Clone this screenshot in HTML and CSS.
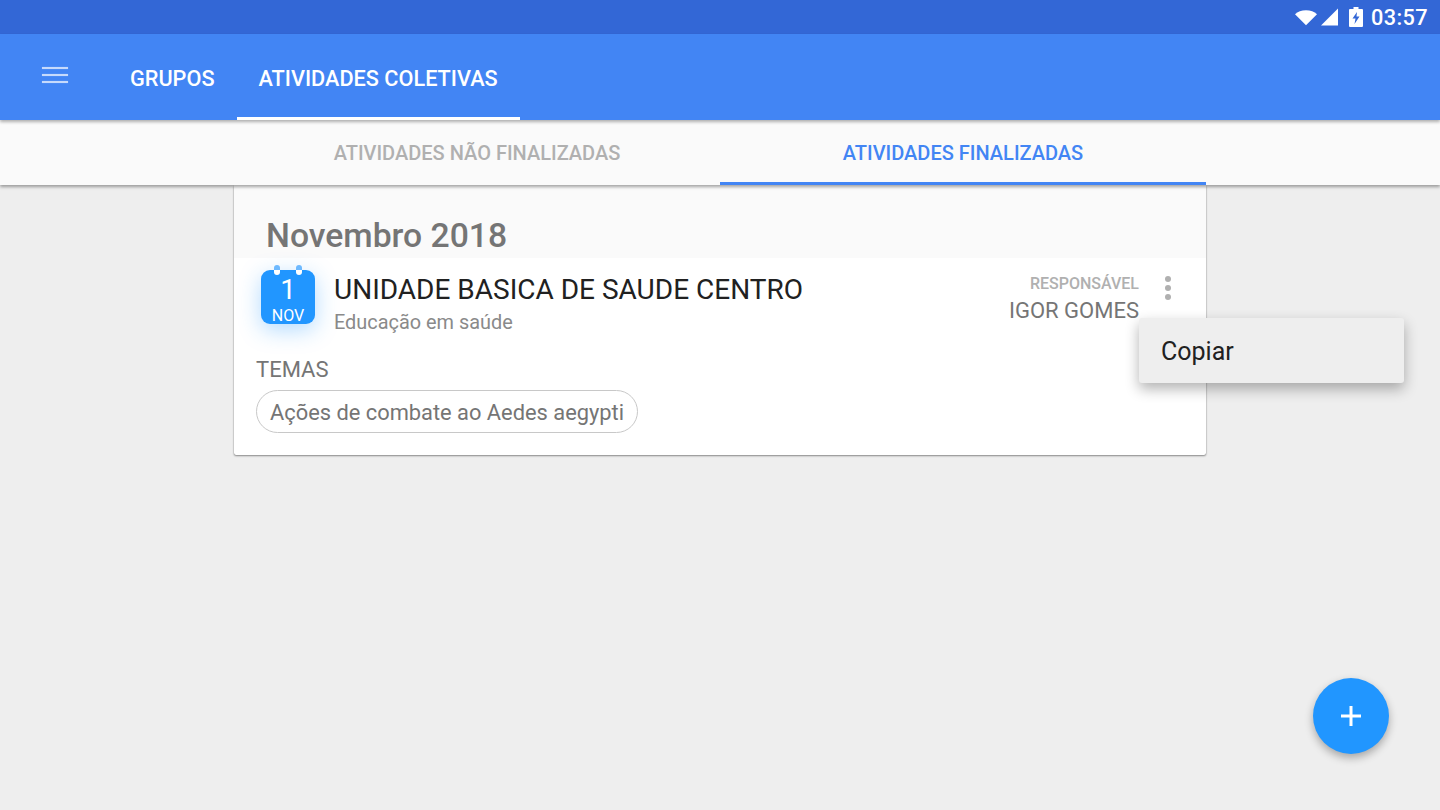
FILE: index.html
```html
<!DOCTYPE html>
<html lang="pt">
<head>
<meta charset="utf-8">
<title>Atividades coletivas</title>
<link rel="stylesheet" href="styles.css">
</head>
<body>
<div class="status">
  <svg class="st-wifi" width="22" height="17" viewBox="0 0 24 18"><path fill="#fff" d="M0 5.500C3 2.600 7 1 12 1s9 1.600 12 4.500L12 17.500z"/></svg>
  <svg class="st-signal" width="18" height="18" viewBox="0 0 18 18"><path fill="#fff" d="M18 0.500V17.500H1z"/></svg>
  <svg class="st-batt" width="14" height="20" viewBox="0 0 14 20"><path fill="#fff" fill-rule="evenodd" d="M4.500 0h5v2H13a1 1 0 0 1 1 1v16a1 1 0 0 1-1 1H1a1 1 0 0 1-1-1V3a1 1 0 0 1 1-1h3.500zM8 5 3.500 11.500H6.500L5.500 17 10.500 9.500H7.500z"/></svg>
  <span class="clock">03:57</span>
</div>
<header class="appbar">
  <button class="menu" aria-label="Menu"><span></span><span></span><span></span></button>
  <nav class="maintabs">
    <a class="maintab">GRUPOS</a>
    <a class="maintab active">ATIVIDADES COLETIVAS</a>
  </nav>
</header>
<nav class="subtabs">
  <a class="subtab">ATIVIDADES NÃO FINALIZADAS</a>
  <a class="subtab active">ATIVIDADES FINALIZADAS</a>
</nav>
<main class="content">
  <section class="card">
    <h2 class="month">Novembro 2018</h2>
    <div class="item">
      <div class="row">
        <div class="cal">
          <i class="ring r1"></i><i class="ring r2"></i>
          <span class="cal-day">1</span>
          <span class="cal-mon">NOV</span>
        </div>
        <div class="title">
          <div class="name">UNIDADE BASICA DE SAUDE CENTRO</div>
          <div class="kind">Educação em saúde</div>
        </div>
        <div class="resp">
          <div class="resp-label">RESPONSÁVEL</div>
          <div class="resp-name">IGOR GOMES</div>
        </div>
        <div class="dots"><i></i><i></i><i></i></div>
      </div>
      <div class="temas">TEMAS</div>
      <span class="chip">Ações de combate ao Aedes aegypti</span>
    </div>
  </section>
</main>
<div class="popup">Copiar</div>
<button class="fab" aria-label="Adicionar">
  <svg width="20" height="20" viewBox="0 0 20 20"><path fill="#fff" d="M8.500 0h3v8.500H20v3H11.500V20h-3V11.500H0v-3H8.500z"/></svg>
</button>
</body>
</html>
```

FILE: styles.css
```css
* { box-sizing: border-box; }
html, body { margin: 0; height: 810px; overflow: hidden; }
body { background: #eeeeee; font-family: Roboto, "Liberation Sans", sans-serif; display: flex; flex-direction: column; position: relative; }

.status { height: 34px; background: #3367d6; display: flex; align-items: center; justify-content: flex-end; padding-right: 12px; flex: none; }
.st-wifi { margin-right: 3px; }
.st-signal { margin-right: 11px; }
.st-batt { margin-right: 8px; }
.clock { color: #fff; font-size: 21.7px; font-weight: 500; letter-spacing: 0.4px; }

.appbar { height: 86px; background: #4285f4; display: flex; flex: none; position: relative; z-index: 3; box-shadow: 0 2px 3px rgba(0,0,0,.3); }
.menu { width: 26px; height: 16px; margin: 33px 0 0 42px; padding: 0; border: 0; background: none; display: flex; flex-direction: column; justify-content: space-between; }
.menu span { display: block; height: 2px; background: #c6dafc; box-shadow: 0 0 1px rgba(255,255,255,.5); }
.maintabs { display: flex; margin-left: 40px; }
.maintab { color: #fff; font-size: 21.7px; font-weight: 500; height: 86px; padding: 0 22px; line-height: 90px; }
.maintab.active { border-bottom: 3px solid #fff; }

.subtabs { height: 65px; background: #fafafa; display: flex; padding: 0 234px; flex: none; position: relative; z-index: 2; box-shadow: 0 2px 3px rgba(0,0,0,.35); }
.subtab { flex: 1; text-align: center; color: #b0b0b0; font-size: 20px; font-weight: 500; line-height: 66px; }
.subtab.active { color: #4285f4; border-bottom: 3px solid #4285f4; }

.content { flex: 1; padding: 0 234px; }
.card { background: #fff; box-shadow: 0 1px 2px rgba(0,0,0,.4), 0 0 1px rgba(0,0,0,.45); border-radius: 2px; height: 270px; }
.month { margin: 0; height: 73px; background: #fafafa; padding: 30px 0 0 32px; font-size: 33.7px; line-height: 42px; font-weight: 500; color: #757575; }
.item { padding: 0 0 0 22px; }
.row { display: flex; height: 92px; }
.cal { width: 54px; height: 54px; margin: 12px 0 0 5px; background: #2196ff; border-radius: 9px; position: relative; box-shadow: 0 6px 22px rgba(33,150,255,.34); color: #fff; display: flex; flex-direction: column; align-items: center; flex: none; }
.ring { position: absolute; top: -5px; width: 6px; height: 10px; border-radius: 3px; background: linear-gradient(#6db9ff 55%, #fff 55%); }
.r1 { left: 13px; }
.r2 { left: 35px; }
.cal-day { font-size: 28px; line-height: 30px; margin-top: 5px; }
.cal-mon { font-size: 16px; line-height: 18px; margin-top: 2px; }
.title { margin-left: 19px; flex: 1; }
.name { font-size: 28px; line-height: 32px; margin-top: 16px; color: #212121; }
.kind { font-size: 19.9px; line-height: 24px; margin-top: 5px; color: #8a8a8a; }
.resp { text-align: right; }
.resp-label { font-size: 16px; font-weight: 500; color: #b0b0b0; line-height: 18px; margin-top: 17px; }
.resp-name { font-size: 22px; line-height: 28px; color: #757575; margin-top: 4px; }
.dots { width: 67px; padding: 18px 0 0 26px; display: flex; flex-direction: column; gap: 3px; flex: none; }
.dots i { width: 6px; height: 6px; border-radius: 50%; background: #b0b0b0; }
.temas { font-size: 22px; line-height: 26px; color: #757575; margin-top: 7px; }
.chip { display: inline-block; margin-top: 7px; height: 43px; border: 1px solid #c8c8c8; border-radius: 22px; padding: 0 13px; font-size: 21.85px; color: #757575; line-height: 43px; }

.popup { position: absolute; left: 1139px; top: 318px; width: 265px; height: 65px; background: #eeeeee; border-radius: 3px; box-shadow: 0 6px 14px rgba(0,0,0,.3); font-size: 25px; line-height: 67px; padding-left: 22px; color: #212121; z-index: 5; }
.fab { position: absolute; left: 1312.500px; top: 677.500px; width: 76px; height: 76px; border-radius: 50%; border: 0; padding: 0; background: #2196ff; box-shadow: 0 4px 8px rgba(0,0,0,.3); display: flex; align-items: center; justify-content: center; }
```
